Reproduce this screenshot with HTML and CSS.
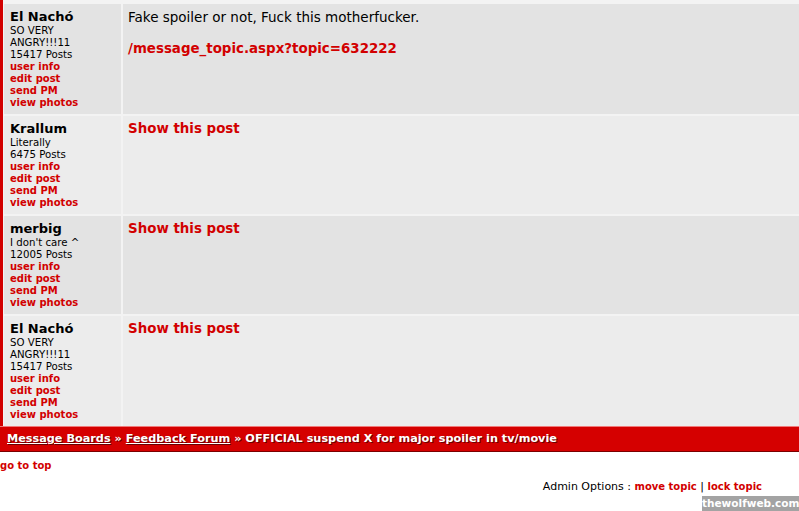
FILE: index.html
```html
<!DOCTYPE html>
<html>
<head>
<meta charset="utf-8">
<link rel="stylesheet" href="styles.css">
</head>
<body>
<div class="board">
  <div class="post alt1">
    <div class="author">
      <div class="name">El Nachó</div>
      <div class="meta">SO VERY ANGRY!!!11</div>
      <div class="meta">15417 Posts</div>
      <a class="ulink" href="#">user info</a>
      <a class="ulink" href="#">edit post</a>
      <a class="ulink" href="#">send PM</a>
      <a class="ulink" href="#">view photos</a>
    </div>
    <div class="message">
      <p class="body-text">Fake spoiler or not, Fuck this motherfucker.</p>
      <a class="big-link" href="#">/message_topic.aspx?topic=632222</a>
    </div>
  </div>
  <div class="post alt2">
    <div class="author">
      <div class="name">Krallum</div>
      <div class="meta">Literally</div>
      <div class="meta">6475 Posts</div>
      <a class="ulink" href="#">user info</a>
      <a class="ulink" href="#">edit post</a>
      <a class="ulink" href="#">send PM</a>
      <a class="ulink" href="#">view photos</a>
    </div>
    <div class="message">
      <a class="big-link" href="#">Show this post</a>
    </div>
  </div>
  <div class="post alt1">
    <div class="author">
      <div class="name">merbig</div>
      <div class="meta">I don't care ^</div>
      <div class="meta">12005 Posts</div>
      <a class="ulink" href="#">user info</a>
      <a class="ulink" href="#">edit post</a>
      <a class="ulink" href="#">send PM</a>
      <a class="ulink" href="#">view photos</a>
    </div>
    <div class="message">
      <a class="big-link" href="#">Show this post</a>
    </div>
  </div>
  <div class="post alt2">
    <div class="author">
      <div class="name">El Nachó</div>
      <div class="meta">SO VERY ANGRY!!!11</div>
      <div class="meta">15417 Posts</div>
      <a class="ulink" href="#">user info</a>
      <a class="ulink" href="#">edit post</a>
      <a class="ulink" href="#">send PM</a>
      <a class="ulink" href="#">view photos</a>
    </div>
    <div class="message">
      <a class="big-link" href="#">Show this post</a>
    </div>
  </div>
</div>
<div class="crumbs">
  <a href="#">Message Boards</a> » <a href="#">Feedback Forum</a> » OFFICIAL suspend X for major spoiler in tv/movie
</div>
<div class="top-link"><a href="#">go to top</a></div>
<div class="admin">Admin Options : <a href="#">move topic</a> | <a href="#">lock topic</a></div>
<div class="watermark">thewolfweb.com</div>
</body>
</html>
```

FILE: styles.css
```css
html, body {
  margin: 0;
  padding: 0;
  background: #ffffff;
  font-family: "DejaVu Sans", Verdana, sans-serif;
  color: #000;
  overflow: hidden;
}

body {
  width: 799px;
  height: 511px;
  position: relative;
}

a {
  color: #d20000;
  text-decoration: none;
  font-weight: bold;
}

.board {
  border-left: 3px solid #d20000;
  background: #f3f3f3;
  padding: 4px 0 0 1px;
  display: flex;
  flex-direction: column;
  gap: 2px;
}

.post {
  display: grid;
  grid-template-columns: 117px 1fr;
  gap: 2px;
}

.alt1 .author, .alt1 .message { background: #e3e3e3; }
.alt2 .author, .alt2 .message { background: #ececec; }

.author {
  padding: 5px 14px 5px 6px;
  display: flex;
  flex-direction: column;
}

.name {
  font-size: 13px;
  line-height: 16px;
  font-weight: bold;
}

.meta {
  font-size: 10.2px;
  line-height: 12px;
}

.ulink {
  font-size: 10px;
  line-height: 12px;
}

.message {
  padding: 5px;
}

.body-text {
  margin: 0 0 16px;
  font-size: 13.5px;
  line-height: 16px;
}

.big-link {
  font-size: 13.4px;
  line-height: 16px;
  display: block;
}

.crumbs {
  height: 24px;
  line-height: 24px;
  background: #d50000;
  border-top: 1px solid #f07a7a;
  border-bottom: 1px solid #7a0000;
  color: #fff;
  font-size: 11.25px;
  font-weight: bold;
  padding-left: 7px;
  white-space: nowrap;
  text-shadow: 1px 1px 0 #6a0000;
}

.crumbs a {
  color: #fff;
  text-decoration: underline;
}

.top-link {
  font-size: 10px;
  line-height: 14px;
  padding: 7px 0 0 0;
}

.admin {
  font-size: 11px;
  line-height: 14px;
  text-align: right;
  padding: 7px 37px 0 0;
}

.admin a {
  font-size: 10px;
}

.watermark {
  position: absolute;
  right: 0;
  bottom: 0;
  width: 97px;
  height: 15px;
  background: #a3a3a3;
  color: #fff;
  font-size: 10.5px;
  font-weight: bold;
  line-height: 15px;
  text-align: center;
  white-space: nowrap;
}
```
